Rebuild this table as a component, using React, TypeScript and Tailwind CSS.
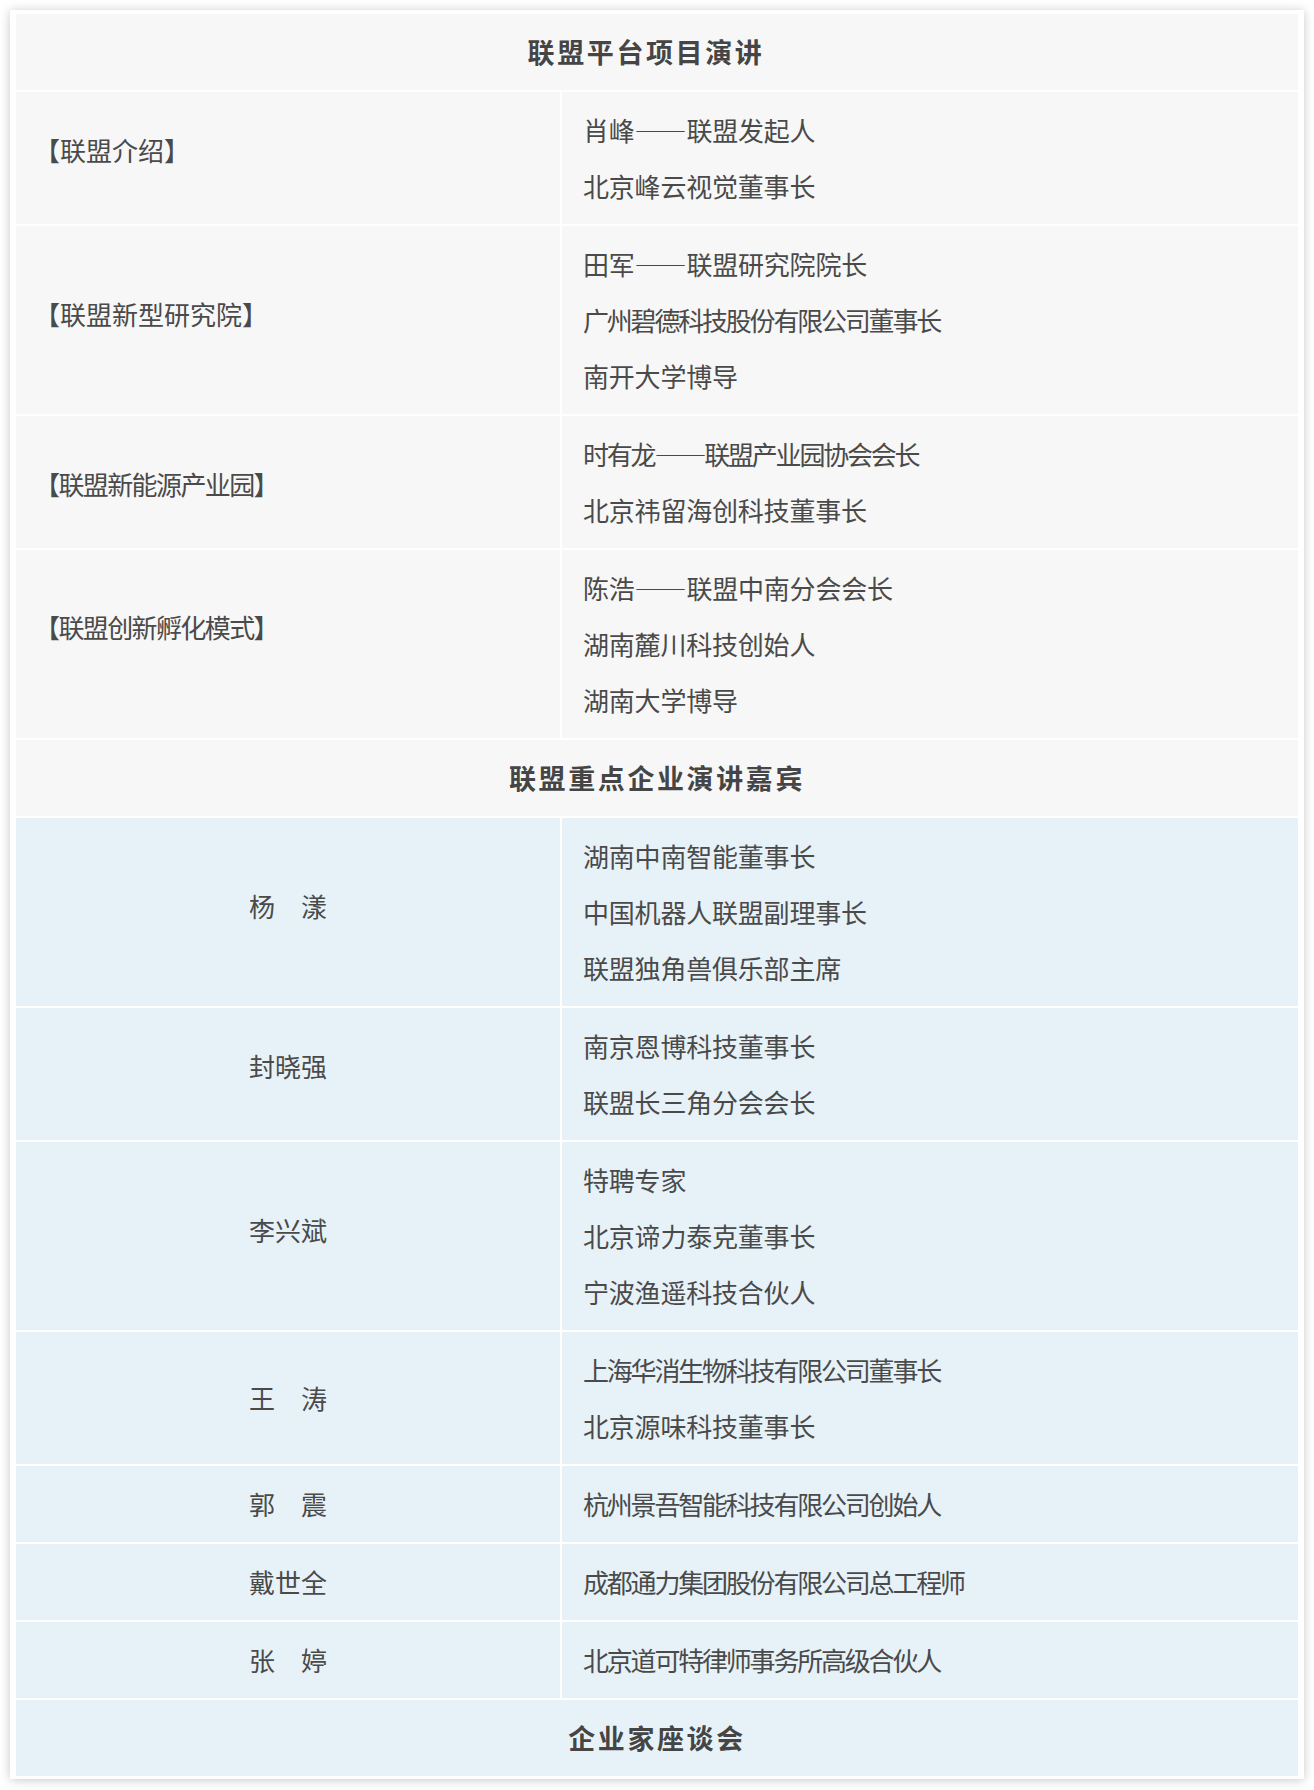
import React from "react";

type Line = { t: string; tight?: boolean };
type Row = { left: string; leftTight?: boolean; center?: boolean; nudge?: string; lines: Line[] };

const top: Row[] = [
  { left: "【联盟介绍】", nudge: "mb-[17px]", lines: [{ t: "肖峰——联盟发起人" }, { t: "北京峰云视觉董事长" }] },
  {
    left: "【联盟新型研究院】",
    nudge: "mb-[12px]",
    lines: [{ t: "田军——联盟研究院院长" }, { t: "广州碧德科技股份有限公司董事长", tight: true }, { t: "南开大学博导" }],
  },
  {
    left: "【联盟新能源产业园】",
    leftTight: true,
    nudge: "mt-[4px]",
    lines: [{ t: "时有龙——联盟产业园协会会长", tight: true }, { t: "北京祎留海创科技董事长" }],
  },
  {
    left: "【联盟创新孵化模式】",
    leftTight: true,
    nudge: "mb-[34px]",
    lines: [{ t: "陈浩——联盟中南分会会长" }, { t: "湖南麓川科技创始人" }, { t: "湖南大学博导" }],
  },
];

const bottom: Row[] = [
  {
    left: "杨　漾",
    center: true,
    nudge: "mb-[12px]",
    lines: [{ t: "湖南中南智能董事长" }, { t: "中国机器人联盟副理事长" }, { t: "联盟独角兽俱乐部主席" }],
  },
  { left: "封晓强", center: true, nudge: "mb-[16px]", lines: [{ t: "南京恩博科技董事长" }, { t: "联盟长三角分会会长" }] },
  {
    left: "李兴斌",
    center: true,
    nudge: "mb-[12px]",
    lines: [{ t: "特聘专家" }, { t: "北京谛力泰克董事长" }, { t: "宁波渔遥科技合伙人" }],
  },
  { left: "王　涛", center: true, lines: [{ t: "上海华消生物科技有限公司董事长", tight: true }, { t: "北京源味科技董事长" }] },
  { left: "郭　震", center: true, lines: [{ t: "杭州景吾智能科技有限公司创始人", tight: true }] },
  { left: "戴世全", center: true, lines: [{ t: "成都通力集团股份有限公司总工程师", tight: true }] },
  { left: "张　婷", center: true, lines: [{ t: "北京道可特律师事务所高级合伙人", tight: true }] },
];

function Header({ text, bg, extra }: { text: string; bg: string; extra?: string }) {
  return (
    <div
      className={`${bg} ${extra ?? ""} py-[10px] text-center text-[27px] leading-[56px] font-bold tracking-[2.6px] text-[#454545]`}
    >
      {text}
    </div>
  );
}

function LineText({ t }: { t: string }) {
  const parts = t.split("——");
  if (parts.length === 1) return <>{t}</>;
  return (
    <>
      {parts[0]}
      <span className="[font-feature-settings:'fwid']">——</span>
      {parts[1]}
    </>
  );
}

function DataRow({ row, bg }: { row: Row; bg: string }) {
  return (
    <div className="grid grid-cols-[544px_736px] gap-[2px]">
      <div
        className={`${bg} flex items-center py-[10px] text-[26px] leading-[56px] text-[#4a4a4a] ${
          row.center ? "justify-center" : "justify-start pl-[18px]"
        } ${row.leftTight ? "tracking-[-1.6px]" : ""}`}
      >
        <span className={`whitespace-pre ${row.nudge ?? ""}`}>{row.left}</span>
      </div>
      <div className={`${bg} flex flex-col py-[10px] pl-[21px] text-[26px] leading-[56px] text-[#4a4a4a]`}>
        {row.lines.map((l, i) => (
          <div key={i} className={`whitespace-nowrap ${l.tight ? "tracking-[-2.2px]" : "tracking-[-0.2px]"}`}>
            <LineText t={l.t} />
          </div>
        ))}
      </div>
    </div>
  );
}

export default function App() {
  return (
    <div
      className="min-h-[1790px] bg-white py-[10px]"
      style={{ fontFamily: '"Noto Sans CJK SC", "Noto Sans", sans-serif' }}
    >
      <div className="mx-[10px] bg-white px-[6px] pt-[4px] pb-[3px] shadow-[0_1px_10px_rgba(0,0,0,0.22)]">
        <div className="flex flex-col gap-[2px]">
          <Header text="联盟平台项目演讲" bg="bg-[#f7f7f7]" extra="pr-[22px]" />
          {top.map((r, i) => (
            <DataRow key={i} row={r} bg="bg-[#f7f7f7]" />
          ))}
          <Header text="联盟重点企业演讲嘉宾" bg="bg-[#f7f7f7]" />
          {bottom.map((r, i) => (
            <DataRow key={i} row={r} bg="bg-[#e7f2f8]" />
          ))}
          <Header text="企业家座谈会" bg="bg-[#e7f2f8]" />
        </div>
      </div>
    </div>
  );
}
